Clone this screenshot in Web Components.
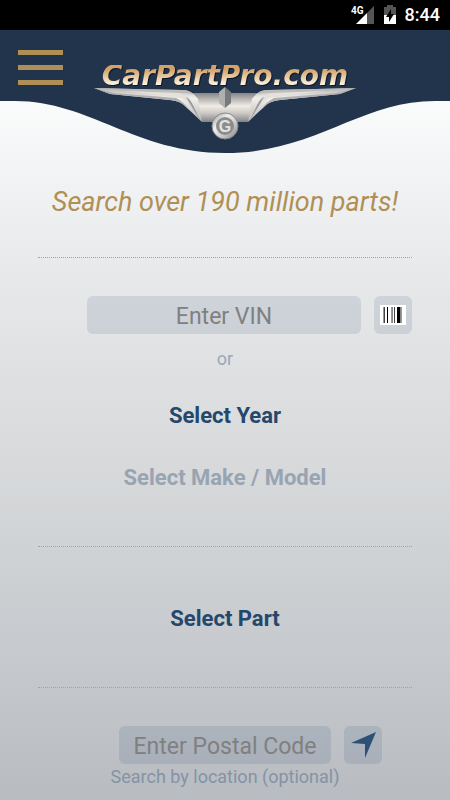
<!DOCTYPE html>
<html lang="en">
<head>
<meta charset="utf-8">
<meta name="viewport" content="width=device-width, initial-scale=1">
<title>CarPartPro.com</title>
<style>
  html { min-height: 100%; background: #b8bbc0; }
  body { margin: 0; font-family: Roboto, "Liberation Sans", sans-serif; color: #24476c; }
</style>
</head>
<body>
<part-search-app></part-search-app>

<script>
function defineElement(name, html, setup) {
  const template = document.createElement('template');
  template.innerHTML = html;

  customElements.define(name, class extends HTMLElement {
    constructor() {
      super();
      this.attachShadow({ mode: 'open' });
      this.shadowRoot.appendChild(template.content.cloneNode(true));
      if (setup) setup(this, this.shadowRoot);
    }
  });
}

defineElement('status-bar', `
  <style>
    :host { display: flex; align-items: center; justify-content: flex-end; height: 30px; padding-right: 10px; background: #000; color: #fff; }
    svg { display: block; height: 24px; }
    .battery { margin: 0 8px 0 9px; }
    time { font-size: 18px; line-height: 24px; font-weight: 500; }
  </style>
  <svg width="24" height="24" viewBox="0 0 24 24" role="img" aria-label="Signal">
    <path d="M6 21 17 10V21Z" fill="#fff"/>
    <path d="M17 10 24 3V21H17Z" fill="#555"/>
    <text x="1" y="11" fill="#fff" font-size="10" font-weight="700">4G</text>
  </svg>
  <svg class="battery" width="14" height="24" viewBox="0 0 14 24" role="img" aria-label="Battery charging">
    <path d="M1 4H4V2H10V4H13V12H1Z" fill="#555"/>
    <path d="M1 12H13V21H1Z" fill="#fff"/>
    <path d="M8 6V11H11L6 19V14H3Z" fill="#000"/>
  </svg>
  <time>8:44</time>
`);

defineElement('menu-button', `
  <style>
    :host { display: block; }
    button { display: grid; gap: 10px; width: 45px; padding: 0; border: none; background: transparent; cursor: pointer; }
    span { height: 5px; background: #b08f55; }
  </style>
  <button type="button" aria-label="Menu"><span></span><span></span><span></span></button>
`);

defineElement('brand-logo', `
  <style>
    :host { display: block; width: 262px; }
    a { display: block; text-decoration: none; text-align: center; }
    .name { display: block; font: italic 700 28px/22px "DejaVu Sans", sans-serif; white-space: nowrap; color: transparent; background: linear-gradient(#d3a268 20%, #fff3df 90%); -webkit-background-clip: text; background-clip: text; filter: drop-shadow(1px 1px 0 #0b1729); }
    svg { display: block; width: 100%; }
  </style>
  <a href="#">
    <span class="name">CarPartPro.com</span>
    <svg viewBox="0 0 262 54" aria-hidden="true">
      <defs>
        <linearGradient id="body" x2="0" y2="1">
          <stop offset="0" stop-color="#858688"/>
          <stop offset=".45" stop-color="#f1ece4"/>
          <stop offset=".7" stop-color="#cbc8c4"/>
          <stop offset="1" stop-color="#828385"/>
        </linearGradient>
        <linearGradient id="wing" x2="0" y2="1">
          <stop offset="0" stop-color="#b5b4b2"/>
          <stop offset=".3" stop-color="#f3f0ec"/>
          <stop offset="1" stop-color="#b3b3b4"/>
        </linearGradient>
        <linearGradient id="ring" x2="1" y2="1">
          <stop offset="0" stop-color="#8f9091"/>
          <stop offset=".35" stop-color="#f2f0ec"/>
          <stop offset=".65" stop-color="#c9c8c6"/>
          <stop offset="1" stop-color="#7d7e80"/>
        </linearGradient>
        <g id="half">
          <path d="M0 1 16 7 76 13Q86 14 91 19L108 35 104 12Q98 3 88 3L40 2Z" fill="url(#wing)"/>
          <path d="M0 1 40 2 88 3Q96 3 99 7Q92 6 84 6L30 4Z" fill="#bdbcba"/>
          <path d="M0 1 16 7 76 13Q86 14 91 19L95 23Q89 14 82 11L20 6Z" fill="#aeaeb0"/>
          <path d="M30 4 84 6Q92 7 97 13L107 33Q95 14 87 11Q60 7 30 4Z" fill="#e4e1dc"/>
          <path d="M92 10Q96 12 99 18L107 34Q98 21 92 10Z" fill="#9b9c9e"/>
        </g>
      </defs>
      <path d="M97 6H165L154 35H108Z" fill="url(#body)"/>
      <use href="#half"/>
      <use href="#half" transform="matrix(-1 0 0 1 262 0)"/>
      <path d="M131 0 125 5V16L131 21Z" fill="#b0b0b1"/>
      <path d="M131 0 137 5V16L131 21Z" fill="#77797c"/>
      <circle cx="131" cy="39" r="13" fill="url(#ring)" stroke="#88898c"/>
      <circle cx="131" cy="39" r="9" fill="#8b8c90"/>
      <text x="131" y="45" text-anchor="middle" font-family="Liberation Sans, sans-serif" font-size="16" font-weight="700" fill="#e4e2de">G</text>
    </svg>
  </a>
`);

defineElement('app-header', `
  <style>
    :host { position: relative; display: grid; grid-template-columns: 1fr auto 1fr; align-items: start; height: 123px; }
    .curve { position: absolute; inset: 0; width: 100%; height: 100%; }
    menu-button { position: relative; margin: 20px 0 0 18px; }
    brand-logo { position: relative; margin-top: 35px; }
  </style>
  <svg class="curve" viewBox="0 0 450 123" preserveAspectRatio="none" aria-hidden="true">
    <path d="M0 0H450V71H435C360 71 315 123 225 123S90 71 15 71H0Z" fill="#21344b"/>
  </svg>
  <menu-button></menu-button>
  <brand-logo></brand-logo>
`);

defineElement('search-section', `
  <style>
    :host { display: flex; flex-direction: column; align-items: center; border-top: 1px dotted #9ba3ad; }
  </style>
  <slot></slot>
`);

defineElement('picker-button', `
  <style>
    :host { display: block; }
    button { display: block; padding: 0; border: none; background: transparent; color: #24476c; font: 700 22px/28px Roboto, "Liberation Sans", sans-serif; cursor: pointer; }
    button:disabled { color: #98a4b2; cursor: default; }
  </style>
  <button type="button"><slot></slot></button>
`, (host, root) => {
  root.querySelector('button').disabled = host.hasAttribute('disabled');
});

// Centred text box with a square icon button hanging off its right side.
defineElement('field-row', `
  <style>
    :host { display: grid; grid-template-columns: 1fr minmax(0, var(--field-width, 274px)) 1fr; column-gap: 13px; width: 100%; }
    input { grid-column: 2; box-sizing: border-box; width: 100%; height: 38px; padding: 2px 8px 0; border: none; border-radius: 6px; background: rgba(36, 71, 108, 0.12); color: #24476c; font: 400 23px/28px Roboto, "Liberation Sans", sans-serif; text-align: center; }
    input::placeholder { color: #808080; opacity: 1; }
    button { display: grid; place-items: center; width: 38px; height: 38px; padding: 0; border: none; border-radius: 6px; background: rgba(36, 71, 108, 0.12); cursor: pointer; }
  </style>
  <input type="text">
  <button type="button"><slot></slot></button>
`, (host, root) => {
  const input = root.querySelector('input');
  input.placeholder = host.getAttribute('placeholder');
  input.setAttribute('aria-label', host.getAttribute('placeholder'));
  root.querySelector('button').setAttribute('aria-label', host.getAttribute('action'));
});

defineElement('part-search-app', `
  <style>
    :host { display: block; box-sizing: border-box; min-height: 100vh; background: linear-gradient(#fff 30px, #fafbfb 100px, #e8e9eb 270px, #dddee0 400px, #d0d3d5 545px, #c3c6cb 690px, #b8bbc0 800px); }
    main { padding: 0 38px 11px; }
    h1 { margin: 33px 0 39px; color: #b08f55; font-size: 27px; line-height: 32px; font-weight: 400; font-style: italic; text-align: center; white-space: nowrap; }
    p { margin: 0; font-size: 18px; line-height: 24px; color: #98a8b8; }
    .vehicle { padding: 38px 0 54px; }
    .vehicle p { margin: 13px 0 31px; }
    .vehicle picker-button + picker-button { margin-top: 34px; }
    .part { padding: 58px 0 54px; }
    .location { padding-top: 38px; }
    .location field-row { --field-width: 212px; }
    .location p { margin-top: 1px; color: #8493a5; }
    svg { display: block; }
  </style>
  <status-bar></status-bar>
  <app-header></app-header>
  <main>
    <h1>Search over 190 million parts!</h1>
    <search-section class="vehicle">
      <field-row placeholder="Enter VIN" action="Scan barcode">
        <svg width="26" height="20" viewBox="0 0 26 20" aria-hidden="true">
          <path d="M0 0H26V20H0Z" fill="#fff"/>
          <path d="M3 2H4V18H3ZM11 2H12V18H11ZM21 2H22V18H21Z" fill="#999"/>
          <path d="M4 2H5V18H4ZM14 2H15V18H14Z" fill="#444"/>
          <path d="M7 2H8V18H7ZM17 2H20V18H17Z" fill="#000"/>
          <path d="M12 2H13V18H12ZM20 2H21V18H20Z" fill="#888"/>
        </svg>
      </field-row>
      <p>or</p>
      <picker-button>Select Year</picker-button>
      <picker-button disabled>Select Make / Model</picker-button>
    </search-section>
    <search-section class="part">
      <picker-button>Select Part</picker-button>
    </search-section>
    <search-section class="location">
      <field-row placeholder="Enter Postal Code" action="Use my location">
        <svg width="26" height="26" viewBox="0 0 26 26" aria-hidden="true">
          <path d="M26 0 15 26V12L1 11Z" fill="#2f5076"/>
        </svg>
      </field-row>
      <p>Search by location (optional)</p>
    </search-section>
  </main>
`);
</script>
</body>
</html>
